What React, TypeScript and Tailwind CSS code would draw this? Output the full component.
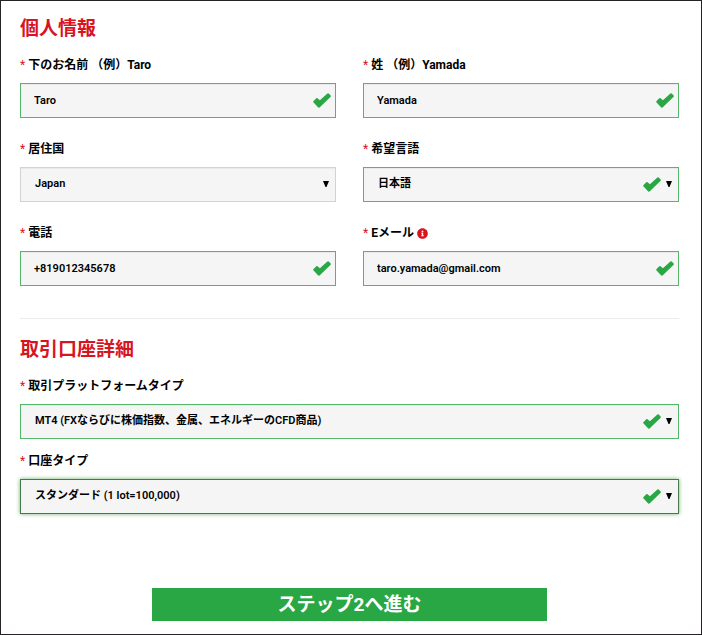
import { ReactNode, useState } from "react";
import { FaInfoCircle } from "react-icons/fa";

function CheckMark({ className }: { className: string }) {
  return (
    <svg
      viewBox="0 0 55 45"
      className={`pointer-events-none absolute top-[10px] h-[15px] w-[18px] fill-[#2aa745] ${className}`}
      aria-hidden="true"
    >
      <path d="M1 25 L10 16 Q12 14 14 16 L21 22 L44 1 Q46 0 48 1 L54 7 Q55 9 54 11 L20 44 Q18 45 16 44 L1 28 Q0 26 1 25 Z" />
    </svg>
  );
}

function Label({ id, children }: { id: string; children: ReactNode }) {
  return (
    <label
      htmlFor={id}
      className="mb-[9px] flex items-center text-[12px] leading-[18px] font-bold whitespace-pre"
    >
      <span className="mr-[3px] font-normal text-[#d8141f]">*</span>
      {children}
    </label>
  );
}

type FieldProps = {
  id: string;
  label: ReactNode;
  value: string;
  type?: string;
};

function TextField({ id, label, value, type = "text" }: FieldProps) {
  const [text, setText] = useState(value);

  return (
    <div>
      <Label id={id}>{label}</Label>
      <div className="relative">
        <input
          id={id}
          type={type}
          value={text}
          onChange={(e) => setText(e.target.value)}
          className="block h-[35px] w-full border border-[#55b76c] bg-[#f5f5f5] pr-8 pl-[13px] text-[11px] font-semibold shadow-[inset_0_1px_1px_rgba(0,0,0,0.05)] outline-none"
        />
        <CheckMark className="right-[5px]" />
      </div>
    </div>
  );
}

type SelectProps = {
  id: string;
  label: string;
  options: string[];
  state?: "valid" | "plain" | "active";
};

const borders = {
  valid: "border-[#55b76c] shadow-[inset_0_1px_1px_rgba(0,0,0,0.05)]",
  plain: "border-[#d3d3d3] shadow-[inset_0_1px_1px_rgba(0,0,0,0.05)]",
  active: "border-[#477a4b] shadow-[0_0_4px_#67b168]",
};

function SelectField({ id, label, options, state = "valid" }: SelectProps) {
  return (
    <div>
      <Label id={id}>{label}</Label>
      <div className="relative">
        <select
          id={id}
          className={`block h-[35px] w-full appearance-none border bg-[#f5f5f5] pr-12 pl-[14px] text-[11px] font-semibold outline-none ${borders[state]}`}
        >
          {options.map((option) => (
            <option key={option}>{option}</option>
          ))}
        </select>
        {state !== "plain" && <CheckMark className="right-[18px]" />}
        <svg
          viewBox="0 0 6 6"
          className="pointer-events-none absolute top-[14px] right-[7px] size-[6px]"
          aria-hidden="true"
        >
          <path d="M0 0H6L3.5 6H2.5Z" />
        </svg>
      </div>
    </div>
  );
}

export default function App() {
  return (
    <form
      onSubmit={(e) => e.preventDefault()}
      className="min-h-screen border border-[#252326] bg-white pt-4 pr-[22px] pb-[13px] pl-[19px] font-[Roboto,'Noto_Sans_CJK_JP',sans-serif] text-black"
    >
      <h2 className="mb-[15px] text-[19px] leading-[24px] font-bold text-[#d8141f]">
        個人情報
      </h2>

      <div className="grid grid-cols-2 gap-x-[27px] gap-y-[22px]">
        <TextField id="first-name" label="下のお名前 （例）Taro" value="Taro" />
        <TextField id="last-name" label="姓 （例）Yamada" value="Yamada" />
        <SelectField
          id="country"
          label="居住国"
          options={["Japan"]}
          state="plain"
        />
        <SelectField id="language" label="希望言語" options={["日本語"]} />
        <TextField id="phone" label="電話" type="tel" value="+819012345678" />
        <TextField
          id="email"
          type="email"
          label={
            <>
              Eメール
              <FaInfoCircle className="ml-[3px] size-[11px] text-[#d8141f]" />
            </>
          }
          value="taro.yamada@gmail.com"
        />
      </div>

      <hr className="mt-8 mb-[19px] border-[#ececec]" />

      <h2 className="mb-[15px] text-[19px] leading-[24px] font-bold text-[#d8141f]">
        取引口座詳細
      </h2>

      <div className="flex flex-col gap-[13px]">
        <SelectField
          id="platform"
          label="取引プラットフォームタイプ"
          options={["MT4 (FXならびに株価指数、金属、エネルギーのCFD商品)"]}
        />
        <SelectField
          id="account-type"
          label="口座タイプ"
          options={["スタンダード (1 lot=100,000)"]}
          state="active"
        />
      </div>

      <button
        type="submit"
        className="mx-auto mt-[74px] block h-[33px] w-3/5 cursor-pointer bg-[#2aa745] text-[19px] leading-[32px] font-bold text-white"
      >
        ステップ2へ進む
      </button>
    </form>
  );
}
